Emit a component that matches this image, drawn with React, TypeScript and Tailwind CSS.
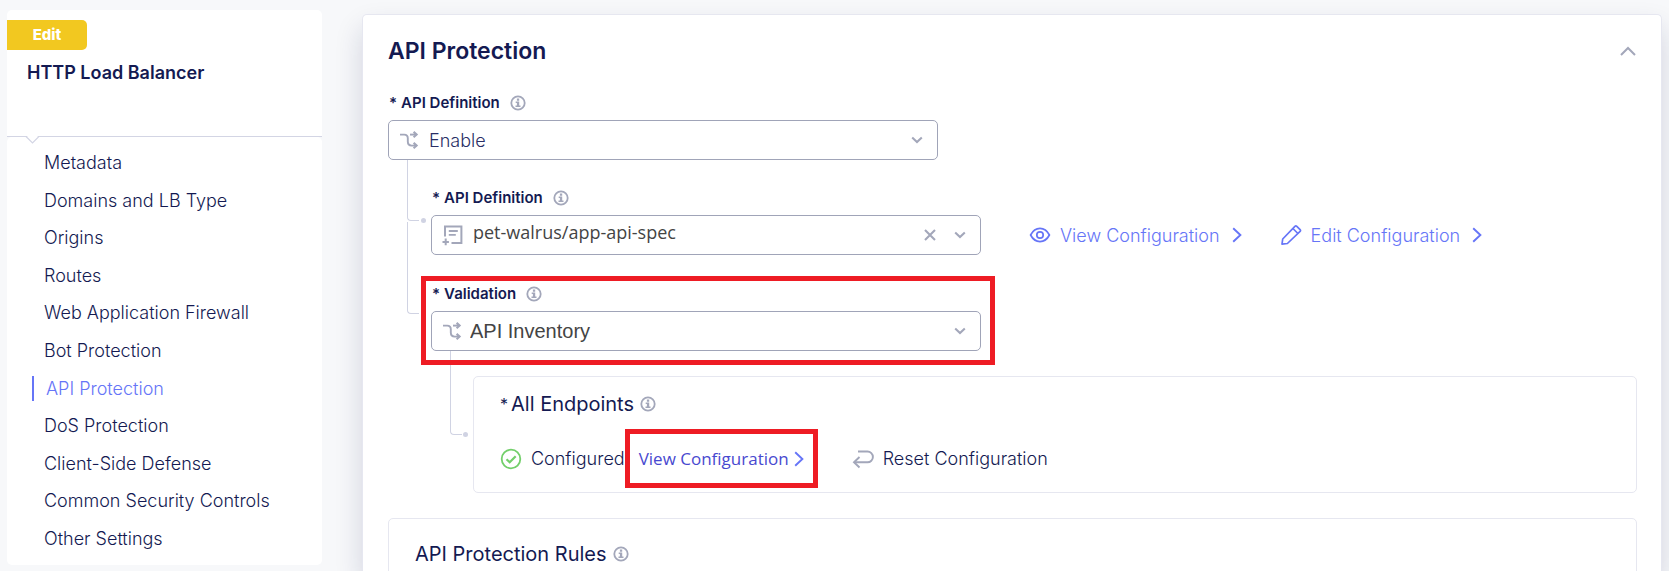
import React from "react";

const navItems = [
  "Metadata",
  "Domains and LB Type",
  "Origins",
  "Routes",
  "Web Application Firewall",
  "Bot Protection",
  "API Protection",
  "DoS Protection",
  "Client-Side Defense",
  "Common Security Controls",
  "Other Settings",
];

function InfoButton({ about }: { about: string }) {
  return (
    <button type="button" aria-label={`About ${about}`} className="shrink-0 text-[#a3a7ba]">
      <svg width="16" height="16" viewBox="0 0 16 16" fill="none" className="block">
        <circle cx="8" cy="8" r="6.7" stroke="currentColor" strokeWidth="1.8" />
        <path d="M6.900 3.600h2.300v2.100H6.900zM5.700 6.600h3.500v4h1.300v1.500H5.500v-1.500h1.400V8.100H5.700z" fill="currentColor" />
      </svg>
    </button>
  );
}

function BranchIcon() {
  return (
    <svg width="20" height="20" viewBox="0 0 20 20" fill="none" stroke="#a3a7ba" strokeWidth="1.9" className="block">
      <path d="M1 4.600h4.200c2.600 0 3.600 1.300 3.600 3.600v3.400c0 2.600 1.200 4 3.800 4h5" />
      <path d="M11 4.600h6.300" />
      <path d="M14.600 1.900l3 2.700-3 2.700M14.600 12.900l3 2.700-3 2.700" strokeWidth="2.100" />
    </svg>
  );
}

function SpecIcon() {
  return (
    <svg width="21" height="21" viewBox="0 0 21 21" fill="none" stroke="#a3a7ba" strokeWidth="2" className="block">
      <path d="M3 11.500V1.500h16.400v16.600H9.500" />
      <path d="M6.800 6h9M6.800 9.900h7" strokeWidth="1.800" />
      <path d="M.5 16.900h6.400M3.700 13.600v6.600" />
    </svg>
  );
}

function DownIcon() {
  return (
    <svg width="12" height="12" viewBox="0 0 12 12" fill="none" stroke="#a3a7ba" strokeWidth="2.100" className="block">
      <path d="M1.200 3.600L6 8l4.800-4.400" />
    </svg>
  );
}

function RightIcon() {
  return (
    <svg width="10" height="16" viewBox="0 0 10 16" fill="none" stroke="#6675f7" strokeWidth="1.9" className="block">
      <path d="M1.200 1.200L8.400 8l-7.200 6.800" />
    </svg>
  );
}

function EyeIcon() {
  return (
    <svg width="22" height="22" viewBox="0 0 22 22" fill="none" stroke="#6675f7" strokeWidth="1.700" className="block">
      <path d="M1.600 11C3.800 6.800 7 4.400 11 4.400S18.200 6.800 20.400 11C18.200 15.200 15 17.600 11 17.600S3.800 15.200 1.600 11z" />
      <circle cx="11" cy="11" r="3.200" />
    </svg>
  );
}

function PencilIcon() {
  return (
    <svg width="22" height="22" viewBox="0 0 22 22" fill="none" stroke="#6675f7" strokeWidth="1.700" strokeLinejoin="round" className="block">
      <path d="M2 20.200L2.700 15 14.900 2.300c.7-.7 1.200-.7 1.900 0l3.300 3.300c.6.6.6 1.100 0 1.800L7.400 19.500z" />
      <path d="M12.900 4.500l5 5" />
    </svg>
  );
}

type FieldProps = {
  id: string;
  label: string;
  value: string;
  icon: React.ReactNode;
  textClass: string;
  clearable?: boolean;
};

function SelectField({ id, label, value, icon, textClass, clearable }: FieldProps) {
  return (
    <div className="w-full max-w-[550px]">
      <div className="mb-[7px] flex h-5 items-center gap-[10px] pl-px">
        <label htmlFor={id} className="text-[15px] font-semibold text-[#141a52]">
          <span className="mr-1">*</span>
          {label}
        </label>
        <InfoButton about={label} />
      </div>
      <div className="relative">
        <select
          id={id}
          defaultValue={value}
          className={`block h-10 w-full appearance-none rounded-[5px] border border-[#a0a4b8] bg-white pr-20 outline-none ${textClass}`}
        >
          <option value={value}>{value}</option>
        </select>
        <span className="pointer-events-none absolute inset-y-0 left-[11px] flex items-center">{icon}</span>
        {clearable && (
          <button type="button" aria-label={`Clear ${label}`} className="absolute inset-y-0 right-[44px] flex items-center">
            <svg width="14" height="14" viewBox="0 0 14 14" fill="none" stroke="#a3a7ba" strokeWidth="2.100">
              <path d="M2 2l10 10M12 2L2 12" />
            </svg>
          </button>
        )}
        <span className="pointer-events-none absolute inset-y-0 right-[15px] flex items-center">
          <DownIcon />
        </span>
      </div>
    </div>
  );
}

function ActionLink({ icon, text }: { icon: React.ReactNode; text: string }) {
  return (
    <a href="#" className="flex items-center text-[18px] font-light text-[#6675f7]">
      {icon}
      <span className="mr-3 ml-[9px] whitespace-nowrap">{text}</span>
      <RightIcon />
    </a>
  );
}

function Sidebar() {
  return (
    <aside className="mt-[10px] w-[315px] shrink-0">
      <div className="relative h-[127px] rounded-t-[5px] border-b border-[#d3d5e4] bg-white pt-[10px]">
        <div className="flex h-[30px] w-20 items-center justify-center rounded-r-[5px] bg-[#f2c820] text-[15px] font-extrabold text-white">
          Edit
        </div>
        <h2 className="mt-[11px] pl-5 text-[18px] leading-6 font-semibold text-[#141a52]">HTTP Load Balancer</h2>
        <svg width="14" height="10" viewBox="0 0 14 10" className="absolute top-[125px] left-[18px]">
          <path d="M1 0L7.500 7.500 14 0z" fill="#fff" />
          <path d="M1 1.500L7.500 8 14 1.500" fill="none" stroke="#d3d5e4" strokeWidth="1.200" />
        </svg>
      </div>
      <nav className="grid min-h-[428px] auto-rows-fr rounded-[5px] bg-white pt-[7px] pb-2">
        {navItems.map((item) =>
          item === "API Protection" ? (
            <a key={item} href="#" aria-current="page" className="ml-[25px] flex items-center text-[18px] font-light text-[#6675f7]">
              <span className="flex h-[25px] items-center border-l-2 border-[#6675f7] pl-3">{item}</span>
            </a>
          ) : (
            <a key={item} href="#" className="flex items-center pl-[37px] text-[18px] font-light text-[#141a52]">
              {item}
            </a>
          ),
        )}
      </nav>
    </aside>
  );
}

export default function App() {
  return (
    <div className="flex h-screen overflow-hidden bg-[#f7f8fa] px-[7px] font-['Inter',sans-serif]">
      <Sidebar />
      <main className="mt-[14px] ml-10 min-w-0 flex-1 rounded-t-[5px] border border-b-0 border-[#e6e7f0] bg-white pr-6 pl-[25px] shadow-[0_14px_28px_rgba(20,26,82,0.16)]">
        <header className="flex items-center justify-between pt-5">
          <h1 className="text-[23px] leading-8 font-semibold text-[#141a52]">API Protection</h1>
          <button type="button" aria-label="Collapse section">
            <svg width="18" height="12" viewBox="0 0 18 12" fill="none" stroke="#a3a7ba" strokeWidth="2">
              <path d="M2 10l7-7 7 7" />
            </svg>
          </button>
        </header>

        <section className="mt-[26px]">
          <SelectField
            id="api-definition-mode"
            label="API Definition"
            value="Enable"
            icon={<BranchIcon />}
            textClass="pl-[40px] text-[18px] font-light text-[#2a2f66]"
          />

          <div className="relative pl-[43px]">
            <div className="absolute top-0 left-[19px] h-[61px] w-3 rounded-bl-[4px] border-b border-l border-[#d0d3e3]" />
            <div className="absolute top-[58px] left-[33px] size-[5px] rounded-full bg-[#d0d3e3]" />
            <div className="absolute top-[62px] left-[19px] h-[92px] w-3 rounded-bl-[4px] border-b border-l border-[#d0d3e3]" />

            <div className="flex items-end gap-12 pt-7">
              <SelectField
                id="api-definition"
                label="API Definition"
                value="pet-walrus/app-api-spec"
                icon={<SpecIcon />}
                textClass="pb-[5px] pl-[41px] font-['Open_Sans',sans-serif] text-[18px] font-normal text-[#444444]"
                clearable
              />
              <div className="flex h-10 items-center gap-[38px]">
                <ActionLink icon={<EyeIcon />} text="View Configuration" />
                <ActionLink icon={<PencilIcon />} text="Edit Configuration" />
              </div>
            </div>

            <div className="relative mt-[29px] max-w-[550px]">
              <SelectField
                id="validation"
                label="Validation"
                value="API Inventory"
                icon={<BranchIcon />}
                textClass="pl-[38px] font-['Liberation_Sans',sans-serif] text-[20px] font-normal text-[#444444]"
              />
              <div className="pointer-events-none absolute -top-2 -right-[14px] -bottom-[14px] -left-[10px] z-10 border-[5px] border-[#ee1c24]" />
            </div>

            <div className="relative pt-[25px] pl-[42px]">
              <div className="absolute top-0 left-[19px] h-[84px] w-3 rounded-bl-[4px] border-b border-l border-[#d0d3e3]" />
              <div className="absolute top-[81px] left-[32px] size-[5px] rounded-full bg-[#d0d3e3]" />
              <div className="rounded-[5px] border border-[#e6e7f0] px-[26px] pt-[13px] pb-1">
                <h2 className="flex h-7 items-center text-[20px] text-[#141a52]">
                  <span className="mr-[3px] text-base">*</span>
                  <span className="mr-[6px]">All Endpoints</span>
                  <InfoButton about="All Endpoints" />
                </h2>
                <div className="mt-[11px] flex h-[59px] items-center text-[18px] font-light text-[#141a52]">
                  <svg width="22" height="22" viewBox="0 0 22 22" fill="none" stroke="#73cf6b" className="mr-[9px] shrink-0">
                    <circle cx="11" cy="11" r="9.300" strokeWidth="1.800" />
                    <path d="M6.500 11.200l3.200 3.100 6-6" strokeWidth="2.200" />
                  </svg>
                  <span>Configured</span>
                  <a
                    href="#"
                    className="flex h-full items-center gap-[5px] border-[5px] border-[#ee1c24] px-[9px] font-['Open_Sans',sans-serif] text-[17px] font-normal whitespace-nowrap text-[#4849d0]"
                  >
                    View Configuration
                    <RightIcon />
                  </a>
                  <button type="button" className="ml-[34px] flex items-center gap-[9px] whitespace-nowrap">
                    <svg width="22" height="20" viewBox="0 0 22 20" fill="none" stroke="#a3a7ba" strokeWidth="1.900">
                      <path d="M6 2.500h9.500a5 5 0 0 1 0 10.800H2" />
                      <path d="M7.500 8L2 13.300l5.500 5.200" />
                    </svg>
                    Reset Configuration
                  </button>
                </div>
              </div>
            </div>
          </div>

          <section className="mt-[25px] h-40 rounded-[5px] border border-[#e6e7f0] px-[26px] pt-[21px]">
            <h2 className="flex h-7 items-center gap-[6px] text-[20px] text-[#141a52]">
              API Protection Rules
              <InfoButton about="API Protection Rules" />
            </h2>
          </section>
        </section>
      </main>
    </div>
  );
}
